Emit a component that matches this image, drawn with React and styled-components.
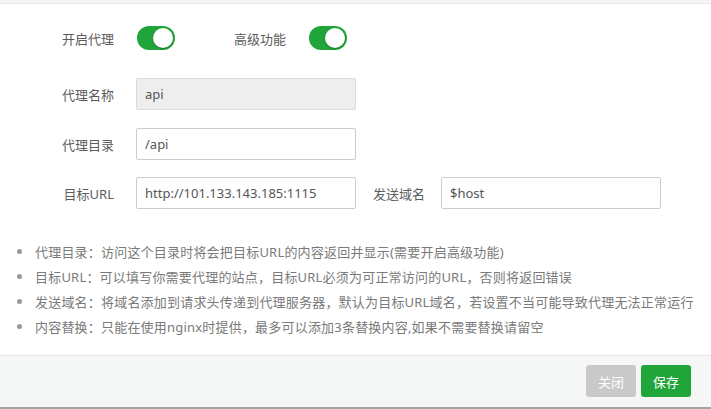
import React from 'react';
import styled, { createGlobalStyle } from 'styled-components';

const GlobalStyle = createGlobalStyle`
  html, body {
    margin: 0;
    padding: 0;
    background: #fff;
  }
  body {
    font-family: "Noto Sans", "Noto Sans CJK SC", sans-serif;
    font-size: 13px;
    color: #555;
  }
  * {
    box-sizing: border-box;
  }
`;

const Page = styled.div`
  display: flex;
  flex-direction: column;
  width: 711px;
  height: 409px;
  background: #fff;
`;

const TopStrip = styled.div`
  height: 4px;
  background: #f5f5f5;
  border-bottom: 1px solid #ebebeb;
`;

const Form = styled.div`
  display: flex;
  flex-direction: column;
  padding: 18px 0 0 20px;
`;

const Row = styled.div`
  display: flex;
  align-items: center;
  height: 32px;
  margin-bottom: ${(p) => p.$mb || 0}px;
`;

const Label = styled.label`
  width: 94px;
  margin-right: ${(p) => p.$mr || 22}px;
  margin-left: ${(p) => p.$ml || 0}px;
  text-align: right;
  color: #5c5c5c;
  font-size: 13px;
  white-space: nowrap;
`;

const SubLabel = styled.label`
  margin: 0 16px 0 17px;
  color: #5c5c5c;
  font-size: 13px;
  white-space: nowrap;
`;

const Input = styled.input`
  width: 220px;
  height: 32px;
  padding: 0 8px;
  border: 1px solid ${(p) => (p.disabled ? '#d8d8e6' : '#ccc')};
  border-radius: 2px;
  background: ${(p) => (p.disabled ? '#eee' : '#fff')};
  color: #555;
  font-family: inherit;
  font-size: 13px;
  outline: none;
`;

const Switch = styled.span`
  display: inline-flex;
  align-items: center;
  justify-content: ${(p) => (p.$on ? 'flex-end' : 'flex-start')};
  width: 38px;
  height: 24px;
  padding: 2px;
  border-radius: 12px;
  background: ${(p) => (p.$on ? '#20a53a' : '#ccc')};
`;

const Knob = styled.span`
  width: 20px;
  height: 20px;
  border-radius: 50%;
  background: #fff;
  box-shadow: 0 1px 2px rgba(0, 0, 0, 0.25);
`;

const Tips = styled.ul`
  list-style: none;
  margin: 30px 0 0;
  padding: 0 0 0 17px;
`;

const Tip = styled.li`
  display: flex;
  align-items: center;
  height: 25px;
  color: #7a7a7a;
  font-size: 13px;
  letter-spacing: 0.2px;
  white-space: nowrap;
`;

const Dot = styled.span`
  width: 5px;
  height: 5px;
  border-radius: 50%;
  background: #999;
  margin-right: 13px;
  flex-shrink: 0;
`;

const Spacer = styled.div`
  flex: 1;
`;

const Footer = styled.div`
  display: flex;
  justify-content: flex-end;
  gap: 5px;
  padding: 9px 20px 10px;
  background: #f5f6f6;
  border-top: 1px solid #e6e6e6;
  border-bottom: 2px solid #a3a3a3;
`;

const Button = styled.button`
  width: 50px;
  height: 32px;
  border: none;
  border-radius: 3px;
  background: ${(p) => (p.$primary ? '#20a53a' : '#c9c9c9')};
  color: #fff;
  font-family: inherit;
  font-size: 13px;
  padding: 0;
`;

const tips = [
  '代理目录：访问这个目录时将会把目标URL的内容返回并显示(需要开启高级功能)',
  '目标URL：可以填写你需要代理的站点，目标URL必须为可正常访问的URL，否则将返回错误',
  '发送域名：将域名添加到请求头传递到代理服务器，默认为目标URL域名，若设置不当可能导致代理无法正常运行',
  '内容替换：只能在使用nginx时提供，最多可以添加3条替换内容,如果不需要替换请留空',
];

export default function App() {
  return (
    <Page>
      <GlobalStyle />
      <TopStrip />
      <Form>
        <Row $mb={24}>
          <Label $mr={23}>开启代理</Label>
          <Switch $on><Knob /></Switch>
          <Label $ml={17} $mr={23}>高级功能</Label>
          <Switch $on><Knob /></Switch>
        </Row>
        <Row $mb={18}>
          <Label>代理名称</Label>
          <Input disabled defaultValue="api" />
        </Row>
        <Row $mb={17}>
          <Label>代理目录</Label>
          <Input defaultValue="/api" />
        </Row>
        <Row>
          <Label>目标URL</Label>
          <Input defaultValue="http://101.133.143.185:1115" />
          <SubLabel>发送域名</SubLabel>
          <Input defaultValue="$host" />
        </Row>
      </Form>
      <Tips>
        {tips.map((t, i) => (
          <Tip key={i}>
            <Dot />
            {t}
          </Tip>
        ))}
      </Tips>
      <Spacer />
      <Footer>
        <Button>关闭</Button>
        <Button $primary>保存</Button>
      </Footer>
    </Page>
  );
}
